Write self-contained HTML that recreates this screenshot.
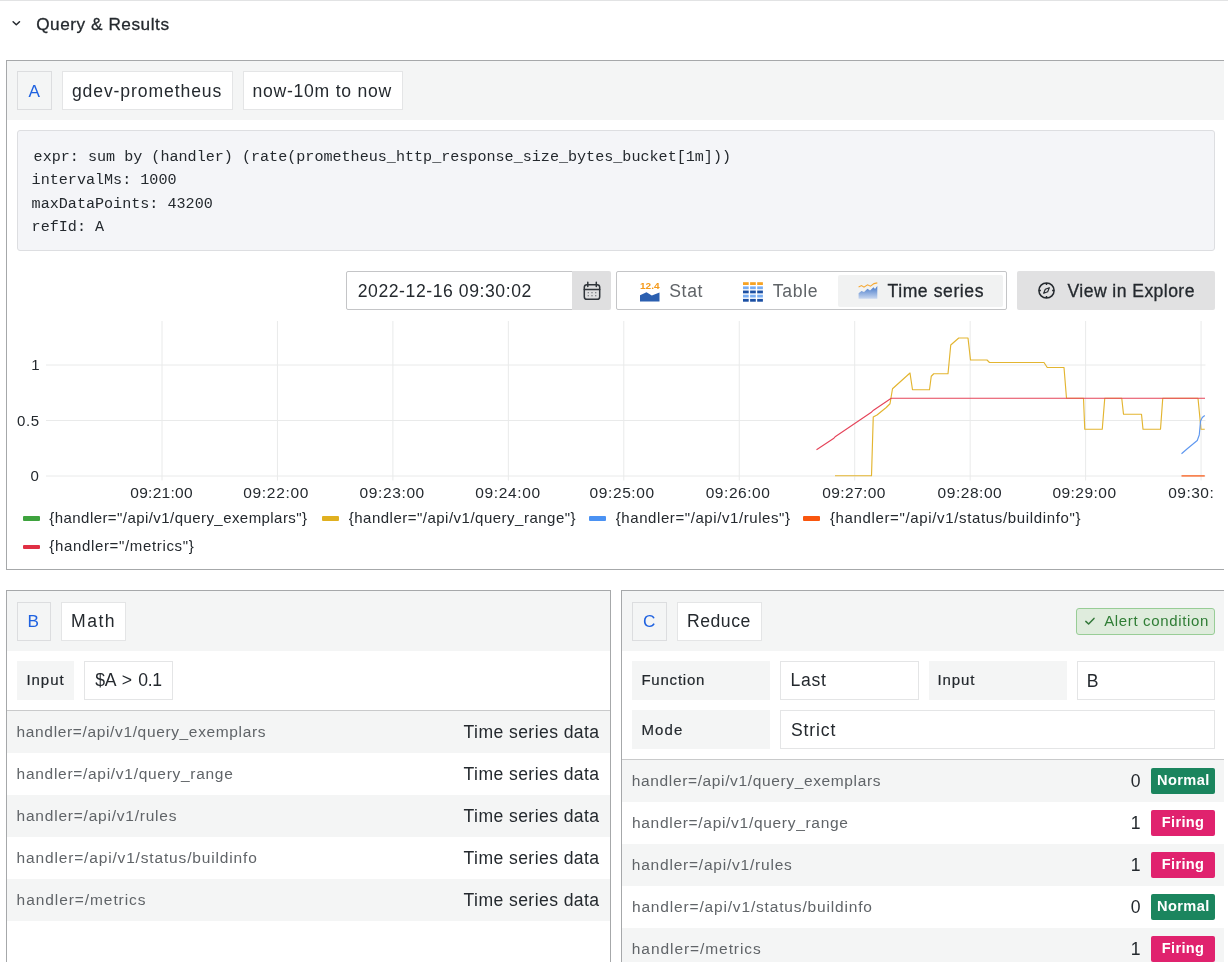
<!DOCTYPE html>
<html lang="en">
<head>
<meta charset="utf-8">
<title>Query &amp; Results</title>
<style>
html,body{margin:0;padding:0;background:#fff;}
body{width:1228px;height:962px;position:relative;overflow:hidden;will-change:transform;font-family:"Liberation Sans",sans-serif;color:#24292e;}
.abs{position:absolute;box-sizing:border-box;}
.t{position:absolute;white-space:nowrap;line-height:1;font-size:17.6px;color:#24292e;}
.sec{color:#606468;}
.panel{position:absolute;box-sizing:border-box;background:#fff;border:1px solid #a6a8aa;}
.hdr{position:absolute;background:#f4f5f5;}
.box{position:absolute;box-sizing:border-box;background:#fff;border:1px solid #e4e5e6;}
.ref{position:absolute;box-sizing:border-box;background:#f4f5f5;border:1px solid #dcdddf;}
.lbl{position:absolute;background:#f4f5f5;}
.row{position:absolute;left:0;right:0;height:42px;}
.row.g{background:#f4f5f5;}
.badge{position:absolute;box-sizing:border-box;border-radius:2px;color:#fff;font-weight:bold;}
.ax{font-size:15px;}
.xl{font-size:15.5px;}
.sm{font-size:15px;-webkit-text-stroke:0.2px #24292e;}
.sm2{font-size:17.6px;}
.rw{font-size:15.5px;}
.bd{font-size:14.6px;}
.mono{font-family:"Liberation Mono",monospace;}
</style>
</head>
<body>
<!-- top line -->
<div class="abs" style="left:0;top:0;width:1228px;height:1px;background:#e2e3e4;"></div>

<!-- title -->
<svg class="abs" style="left:10px;top:17px;" width="14" height="14" viewBox="0 0 14 14"><path d="M3.1 4.7 L6.3 7.7 L9.5 4.7" fill="none" stroke="#24292e" stroke-width="1.5" stroke-linecap="round" stroke-linejoin="round"/></svg>
<div class="t" id="title" style="left:36.17px;top:16.2px;font-size:17.2px;-webkit-text-stroke:0.3px #24292e;letter-spacing:0.553px;">Query &amp; Results</div>

<!-- PANEL A -->
<div class="panel" id="pA" style="left:6px;top:60px;width:1230px;height:510px;"></div>
<div class="hdr" style="left:7px;top:61px;width:1217px;height:59px;"></div>
<div class="ref" style="left:17px;top:71px;width:35px;height:39px;"></div>
<div class="t" id="refA" style="font-size:17.2px;left:28.62px;top:83.20px;color:#1f62e0;">A</div>
<div class="box" style="left:62px;top:71px;width:171px;height:39px;"></div>
<div class="t" id="gdev" style="left:71.90px;top:83.20px;letter-spacing:0.892px;">gdev-prometheus</div>
<div class="box" style="left:243px;top:71px;width:160px;height:39px;"></div>
<div class="t" id="now" style="left:252.48px;top:83.20px;letter-spacing:0.740px;">now-10m to now</div>

<!-- code block -->
<div class="abs" style="left:17px;top:130px;width:1198px;height:121px;background:#f4f5f8;border:1px solid #dddee1;border-radius:3px;"></div>
<div class="t mono" id="c1" style="left:33.6px;top:149.7px;font-size:15.1px;">expr: sum by (handler) (rate(prometheus_http_response_size_bytes_bucket[1m]))</div>
<div class="t mono" id="c2" style="left:31.6px;top:173.2px;font-size:15.1px;">intervalMs: 1000</div>
<div class="t mono" id="c3" style="left:31.6px;top:196.7px;font-size:15.1px;">maxDataPoints: 43200</div>
<div class="t mono" id="c4" style="left:31.6px;top:220.2px;font-size:15.1px;">refId: A</div>

<!-- toolbar -->
<div class="abs" style="left:346px;top:271px;width:227px;height:39px;background:#fff;border:1px solid #c4c5c7;border-radius:2px 0 0 2px;"></div>
<div class="t" id="date" style="left:357.70px;top:282.70px;letter-spacing:0.568px;">2022-12-16 09:30:02</div>
<div class="abs" style="left:572px;top:271px;width:39px;height:39px;background:#dfdfe0;border-radius:0 2px 2px 0;"></div>
<svg class="abs" style="left:581.5px;top:280.5px;" width="20" height="20" viewBox="0 0 20 20"><rect x="2.3" y="3.7" width="15.4" height="14.6" rx="2.6" fill="none" stroke="#30353a" stroke-width="1.5"/><path d="M2.3 8.6H17.7M5.8 1.2V5.4M14.3 1.2V5.4" fill="none" stroke="#30353a" stroke-width="1.5" stroke-linecap="round"/><path d="M5.7 11.7h1.1M9.45 11.7h1.1M13.2 11.7h1.1M5.7 14.7h1.1M9.45 14.7h1.1M13.2 14.7h1.1" stroke="#4a4f54" stroke-width="1.1"/></svg>

<div class="abs" style="left:616px;top:271px;width:391px;height:39px;background:#fff;border:1px solid #c4c5c7;border-radius:2px;"></div>
<div class="abs" style="left:838px;top:274.5px;width:165px;height:32px;background:#f1f2f2;border-radius:2px;"></div>
<!-- stat icon -->
<svg class="abs" style="left:639.5px;top:282px;" width="20" height="20" viewBox="0 0 20 20"><text x="0" y="7.2" font-family="Liberation Sans, sans-serif" font-weight="bold" font-size="8.6" fill="#f59a1b" textLength="19.6" lengthAdjust="spacingAndGlyphs">12.4</text><path d="M0 19.5V13.2L6.5 10.2L11.8 13.4L19.5 10.6V19.5Z" fill="#2b5fb0"/></svg>
<div class="t sec" id="stat" style="left:669.16px;top:282.70px;letter-spacing:0.679px;">Stat</div>
<!-- table icon -->
<svg class="abs" style="left:743px;top:282px;" width="20" height="20" viewBox="0 0 20 20"><rect x="0" y="0.2" width="5.7" height="2.8" fill="#f7a324"/><rect x="7.1" y="0.2" width="5.7" height="2.8" fill="#f7a324"/><rect x="14.2" y="0.2" width="5.7" height="2.8" fill="#f7a324"/><rect x="0" y="4.4" width="5.7" height="2.8" fill="#78adf3"/><rect x="7.1" y="4.4" width="5.7" height="2.8" fill="#78adf3"/><rect x="14.2" y="4.4" width="5.7" height="2.8" fill="#78adf3"/><rect x="0" y="8.55" width="5.7" height="2.8" fill="#1b4fa3"/><rect x="7.1" y="8.55" width="5.7" height="2.8" fill="#1b4fa3"/><rect x="14.2" y="8.55" width="5.7" height="2.8" fill="#1b4fa3"/><rect x="0" y="12.7" width="5.7" height="2.8" fill="#78adf3"/><rect x="7.1" y="12.7" width="5.7" height="2.8" fill="#78adf3"/><rect x="14.2" y="12.7" width="5.7" height="2.8" fill="#78adf3"/><rect x="0" y="16.9" width="5.7" height="2.8" fill="#1b4fa3"/><rect x="7.1" y="16.9" width="5.7" height="2.8" fill="#1b4fa3"/><rect x="14.2" y="16.9" width="5.7" height="2.8" fill="#1b4fa3"/></svg>
<div class="t sec" id="table" style="left:772.83px;top:282.70px;letter-spacing:0.653px;">Table</div>
<!-- time series icon -->
<svg class="abs" style="left:857.5px;top:282px;" width="20" height="18" viewBox="0 0 20 18"><defs><linearGradient id="tsg" x1="0" y1="0" x2="0" y2="1"><stop offset="0" stop-color="#3f74c7"/><stop offset="1" stop-color="#c9d8f0"/></linearGradient></defs><path d="M0.6 11.3L3.5 9L6 10L9.5 6.8L12 8.6L15.5 5.2L17 7L19.3 4V16.8H0.6Z" fill="url(#tsg)"/><path d="M0.6 5L3.5 3.6L6 5.2L9.5 2.8L12.5 4.2L16 1.6L19.3 0.9" fill="none" stroke="#f5a832" stroke-width="1.1"/></svg>
<div class="t" id="ts" style="-webkit-text-stroke:0.3px #24292e;left:887.49px;top:282.70px;letter-spacing:0.574px;">Time series</div>

<div class="abs" style="left:1017px;top:271px;width:198px;height:39px;background:#e1e1e2;border-radius:2px;"></div>
<svg class="abs" style="left:1036.7px;top:281px;" width="19" height="19" viewBox="0 0 19 19"><circle cx="9.5" cy="9.5" r="7.6" fill="none" stroke="#24292e" stroke-width="1.5"/><path d="M12.3 6.7L10.7 10.7L6.7 12.3L8.3 8.3Z" fill="none" stroke="#24292e" stroke-width="1.15" stroke-linejoin="round"/><path d="M9.5 1.9v2M9.5 15.1v2M1.9 9.5h2M15.1 9.5h2" stroke="#24292e" stroke-width="1.5"/></svg>
<div class="t" id="vie" style="-webkit-text-stroke:0.3px #24292e;left:1067.52px;top:282.70px;letter-spacing:0.427px;">View in Explore</div>

<!-- CHART -->
<svg class="abs" id="chart" style="left:0;top:315px;" width="1228" height="200" viewBox="0 315 1228 200"><g stroke="#e9eaea" stroke-width="1" fill="none"><path d="M46 365H1205.5"/><path d="M46 420.5H1205.5"/><path d="M46 476H1205.5"/><path d="M162.00 321V480.5"/><path d="M277.45 321V480.5"/><path d="M392.90 321V480.5"/><path d="M508.35 321V480.5"/><path d="M623.80 321V480.5"/><path d="M739.25 321V480.5"/><path d="M854.70 321V480.5"/><path d="M970.15 321V480.5"/><path d="M1085.60 321V480.5"/><path d="M1201.05 321V480.5"/></g><polyline points="835.00,475.75 871.50,475.75 873.25,417.00 877.00,415.00 886.25,407.50 890.00,403.75 892.50,388.75 910.00,373.00 912.50,389.75 929.50,389.75 931.25,376.25 933.75,373.75 948.00,373.75 950.75,345.00 958.75,338.00 968.00,338.00 970.50,360.00 987.00,360.00 989.50,362.50 1044.00,362.50 1047.25,367.50 1064.00,367.50 1066.50,398.25 1083.50,398.25 1084.75,429.25 1102.25,429.25 1104.75,398.25 1121.75,398.25 1123.50,414.25 1141.50,414.25 1143.00,429.25 1160.50,429.25 1162.75,398.25 1198.00,398.25 1201.00,429.25 1204.75,429.25" fill="none" stroke="#e3b530" stroke-width="1.15" stroke-linejoin="round"/><polyline points="1181.50,453.75 1187.25,448.75 1197.25,440.50 1199.25,435.00 1200.50,421.25 1202.25,417.50 1204.75,415.50" fill="none" stroke="#5f98f0" stroke-width="1.15" stroke-linejoin="round"/><polyline points="1181.50,475.90 1204.75,475.90" fill="none" stroke="#f9682a" stroke-width="1.4"/><polyline points="816.50,449.75 833.50,438.60 835.50,436.40 871.00,412.60 873.50,410.20 891.25,398.25 1205.00,398.25" fill="none" stroke="#e5445a" stroke-width="1.15" stroke-linejoin="round"/></svg>
<div class="t ax" id="y0" style="left:31.2px;top:357.25px;">1</div>
<div class="t ax" id="y1" style="left:17.07px;top:412.75px;letter-spacing:0.605px;">0.5</div>
<div class="t ax" id="y2" style="left:30.6px;top:468.25px;">0</div>
<div class="t ax xl" id="x0" style="left:130.32px;top:485.3px;letter-spacing:0.265px;">09:21:00</div>
<div class="t ax xl" id="x1" style="left:243.17px;top:485.3px;letter-spacing:0.708px;">09:22:00</div>
<div class="t ax xl" id="x2" style="left:359.61px;top:485.3px;letter-spacing:0.613px;">09:23:00</div>
<div class="t ax xl" id="x3" style="left:475.31px;top:485.3px;letter-spacing:0.626px;">09:24:00</div>
<div class="t ax xl" id="x4" style="left:589.51px;top:485.3px;letter-spacing:0.615px;">09:25:00</div>
<div class="t ax xl" id="x5" style="left:705.70px;top:485.3px;letter-spacing:0.556px;">09:26:00</div>
<div class="t ax xl" id="x6" style="left:822.15px;top:485.3px;letter-spacing:0.428px;">09:27:00</div>
<div class="t ax xl" id="x7" style="left:937.58px;top:485.3px;letter-spacing:0.545px;">09:28:00</div>
<div class="t ax xl" id="x8" style="left:1052.39px;top:485.3px;letter-spacing:0.474px;">09:29:00</div>
<div class="abs" style="left:1160px;top:484px;width:54px;height:20px;overflow:hidden;"><div class="t ax xl" id="x9" style="left:8.2px;top:1.3px;letter-spacing:0.5px;">09:30:00</div></div>
<div class="abs" style="left:22.5px;top:516.2px;width:17px;height:4.6px;border-radius:1px;background:#3ea33e;"></div>
<div class="t ax" id="l1" style="left:49.33px;top:509.95px;letter-spacing:0.436px;">{handler=&quot;/api/v1/query_exemplars&quot;}</div>
<div class="abs" style="left:321.5px;top:516.2px;width:17px;height:4.6px;border-radius:1px;background:#e0b020;"></div>
<div class="t ax" id="l2" style="left:348.71px;top:509.95px;letter-spacing:0.495px;">{handler=&quot;/api/v1/query_range&quot;}</div>
<div class="abs" style="left:589.25px;top:516.2px;width:17px;height:4.6px;border-radius:1px;background:#4b92f3;"></div>
<div class="t ax" id="l3" style="left:615.71px;top:509.95px;letter-spacing:0.580px;">{handler=&quot;/api/v1/rules&quot;}</div>
<div class="abs" style="left:802.5px;top:516.2px;width:17px;height:4.6px;border-radius:1px;background:#f9560e;"></div>
<div class="t ax" id="l4" style="left:829.89px;top:509.95px;letter-spacing:0.647px;">{handler=&quot;/api/v1/status/buildinfo&quot;}</div>
<div class="abs" style="left:22.5px;top:544.6px;width:17px;height:4.6px;border-radius:1px;background:#e02f44;"></div>
<div class="t ax" id="l5" style="left:49.33px;top:538.35px;letter-spacing:0.651px;">{handler=&quot;/metrics&quot;}</div>

<!-- PANEL B -->
<div class="panel" id="pB" style="left:6px;top:590px;width:605px;height:400px;"></div>
<div class="hdr" style="left:7px;top:591px;width:603px;height:59.5px;"></div>
<div class="ref" style="left:17px;top:601.5px;width:34px;height:39px;"></div>
<div class="t" id="refB" style="font-size:17.2px;left:27.58px;top:613.20px;color:#1f62e0;">B</div>
<div class="box" style="left:60.5px;top:601.5px;width:65px;height:39px;"></div>
<div class="t" id="math" style="left:71.12px;top:613.20px;letter-spacing:1.479px;">Math</div>
<div class="lbl" style="left:17px;top:660.5px;width:57px;height:39px;"></div>
<div class="t sm" id="inpB" style="left:26.40px;top:672.30px;letter-spacing:0.977px;">Input</div>
<div class="box" style="left:84px;top:660.5px;width:88.5px;height:39px;"></div>
<div class="t" id="expr" style="left:95.32px;top:672.20px;letter-spacing:-0.3px;word-spacing:1.9px;">$A &gt; 0.1</div>
<div class="abs" style="left:7px;top:709.5px;width:603px;height:1.2px;background:#c9cacb;"></div>
<div class="abs" style="left:7px;top:711px;width:603px;height:42px;background:#f4f5f5;"></div>
<div class="t rw sec" id="b0" style="left:16.58px;top:723.60px;letter-spacing:0.644px;">handler=/api/v1/query_exemplars</div>
<div class="t" id="bt0" style="left:463.58px;top:723.90px;letter-spacing:0.412px;">Time series data</div>
<div class="t rw sec" id="b1" style="left:16.59px;top:765.60px;letter-spacing:0.709px;">handler=/api/v1/query_range</div>
<div class="t" id="bt1" style="left:463.58px;top:765.90px;letter-spacing:0.412px;">Time series data</div>
<div class="abs" style="left:7px;top:794.5px;width:603px;height:42px;background:#f4f5f5;"></div>
<div class="t rw sec" id="b2" style="left:16.58px;top:807.60px;letter-spacing:0.777px;">handler=/api/v1/rules</div>
<div class="t" id="bt2" style="left:463.58px;top:807.90px;letter-spacing:0.412px;">Time series data</div>
<div class="t rw sec" id="b3" style="left:16.59px;top:849.60px;letter-spacing:0.841px;">handler=/api/v1/status/buildinfo</div>
<div class="t" id="bt3" style="left:463.58px;top:849.90px;letter-spacing:0.412px;">Time series data</div>
<div class="abs" style="left:7px;top:878.5px;width:603px;height:42px;background:#f4f5f5;"></div>
<div class="t rw sec" id="b4" style="left:16.58px;top:891.60px;letter-spacing:0.928px;">handler=/metrics</div>
<div class="t" id="bt4" style="left:463.58px;top:891.90px;letter-spacing:0.412px;">Time series data</div>
<!-- PANEL C -->
<div class="panel" id="pC" style="left:621px;top:590px;width:620px;height:400px;"></div>
<div class="hdr" style="left:622px;top:591px;width:602px;height:59.5px;"></div>
<div class="ref" style="left:632.25px;top:601.5px;width:34.25px;height:39px;"></div>
<div class="t" id="refC" style="font-size:17.2px;left:643.00px;top:613.20px;color:#1f62e0;">C</div>
<div class="box" style="left:676.5px;top:601.5px;width:85px;height:39px;"></div>
<div class="t" id="reduce" style="left:687.12px;top:613.20px;letter-spacing:0.491px;">Reduce</div>
<div class="abs" style="left:1076px;top:607.5px;width:139px;height:27.8px;background:#dfecdd;border:1px solid #98cd96;border-radius:3px;"></div>
<svg class="abs" style="left:1084px;top:615px;" width="12" height="12" viewBox="0 0 12 12"><path d="M1.8 6.4L4.6 9L10 3.4" fill="none" stroke="#33783a" stroke-width="1.5" stroke-linecap="round" stroke-linejoin="round"/></svg>
<div class="t ax" id="alert" style="left:1104.13px;top:613.20px;color:#2f7d35;letter-spacing:0.650px;">Alert condition</div>
<div class="lbl" style="left:632.25px;top:660.5px;width:138px;height:39px;"></div>
<div class="t sm" id="fn" style="left:641.39px;top:672.30px;letter-spacing:0.793px;">Function</div>
<div class="box" style="left:780px;top:660.5px;width:139px;height:39px;"></div>
<div class="t" id="last" style="left:790.56px;top:672.20px;letter-spacing:0.724px;">Last</div>
<div class="lbl" style="left:929px;top:660.5px;width:138px;height:39px;"></div>
<div class="t sm" id="inpC" style="left:937.44px;top:672.30px;letter-spacing:0.880px;">Input</div>
<div class="box" style="left:1077px;top:660.5px;width:138px;height:39px;"></div>
<div class="t sm2" id="bsel" style="left:1086.77px;top:673.20px;">B</div>
<div class="lbl" style="left:632.25px;top:710px;width:138px;height:39px;"></div>
<div class="t sm" id="mode" style="left:641.39px;top:721.80px;letter-spacing:1.145px;">Mode</div>
<div class="box" style="left:780px;top:710px;width:435px;height:39px;"></div>
<div class="t" id="strict" style="left:790.99px;top:721.70px;letter-spacing:0.869px;">Strict</div>
<div class="abs" style="left:622px;top:759px;width:602px;height:1.2px;background:#c9cacb;"></div>
<div class="abs" style="left:622px;top:760.2px;width:602px;height:41.8px;background:#f4f5f5;"></div>
<div class="t rw sec" id="c0r" style="left:631.80px;top:773.10px;letter-spacing:0.636px;">handler=/api/v1/query_exemplars</div>
<div class="t" id="v0" style="right:87.5px;top:772.50px;">0</div>
<div class="abs" style="left:1151px;top:768px;width:64px;height:25.5px;background:#1b855e;border-radius:2px;"></div>
<div class="t bd" id="s0" style="left:1156.91px;top:772.90px;color:#fff;font-weight:bold;letter-spacing:0.436px;">Normal</div>
<div class="t rw sec" id="c1r" style="left:631.96px;top:815.10px;letter-spacing:0.700px;">handler=/api/v1/query_range</div>
<div class="t" id="v1" style="right:87.5px;top:814.50px;">1</div>
<div class="abs" style="left:1151px;top:810px;width:64px;height:25.5px;background:#e0226e;border-radius:2px;"></div>
<div class="t bd" id="s1" style="left:1161.87px;top:814.90px;color:#fff;font-weight:bold;letter-spacing:0.292px;">Firing</div>
<div class="abs" style="left:622px;top:844px;width:602px;height:42px;background:#f4f5f5;"></div>
<div class="t rw sec" id="c2r" style="left:631.80px;top:857.10px;letter-spacing:0.786px;">handler=/api/v1/rules</div>
<div class="t" id="v2" style="right:87.5px;top:856.50px;">1</div>
<div class="abs" style="left:1151px;top:852px;width:64px;height:25.5px;background:#e0226e;border-radius:2px;"></div>
<div class="t bd" id="s2" style="left:1161.87px;top:856.90px;color:#fff;font-weight:bold;letter-spacing:0.292px;">Firing</div>
<div class="t rw sec" id="c3r" style="left:631.96px;top:899.10px;letter-spacing:0.834px;">handler=/api/v1/status/buildinfo</div>
<div class="t" id="v3" style="right:87.5px;top:898.50px;">0</div>
<div class="abs" style="left:1151px;top:894px;width:64px;height:25.5px;background:#1b855e;border-radius:2px;"></div>
<div class="t bd" id="s3" style="left:1156.91px;top:898.90px;color:#fff;font-weight:bold;letter-spacing:0.436px;">Normal</div>
<div class="abs" style="left:622px;top:928px;width:602px;height:42px;background:#f4f5f5;"></div>
<div class="t rw sec" id="c4r" style="left:631.80px;top:941.10px;letter-spacing:0.931px;">handler=/metrics</div>
<div class="t" id="v4" style="right:87.5px;top:940.50px;">1</div>
<div class="abs" style="left:1151px;top:936px;width:64px;height:25.5px;background:#e0226e;border-radius:2px;"></div>
<div class="t bd" id="s4" style="left:1161.87px;top:940.90px;color:#fff;font-weight:bold;letter-spacing:0.292px;">Firing</div>
<div class="abs" style="left:1224px;top:40px;width:4px;height:922px;background:#fff;"></div>
</body>
</html>
